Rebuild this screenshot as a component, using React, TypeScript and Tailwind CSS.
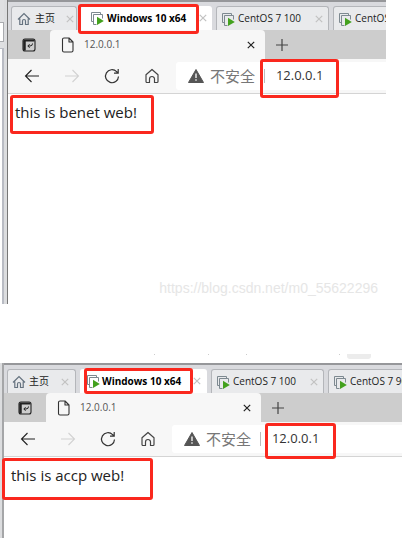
import { useState } from "react";

interface BrowserWindowProps {
  className: string;
  message: string;
  lastTab: string;
  // Highlight frames differ a little between the two windows
  homeTabClass: string;
  activeTabClass: string;
  tabMarkClass: string;
  addressMarkClass: string;
  messageClass: string;
}

function HomeIcon({ className }: { className: string }) {
  return (
    <svg viewBox="0 0 16 16" className={className} fill="none" stroke="currentColor" strokeWidth="1.2" strokeLinejoin="round">
      <path d="M2 6.800 8 1.500l6 5.300v6.700a1 1 0 0 1-1 1h-2.500V11a2.500 2.500 0 0 0-5 0v3.500H3a1 1 0 0 1-1-1z" />
    </svg>
  );
}

function TabHomeIcon() {
  return (
    <svg viewBox="0 0 14 14" className="h-3.5 w-3.5 shrink-0 text-[#65727f]" fill="none" stroke="currentColor" strokeWidth="1.2">
      <path d="M1 7.500 7 1.500l6 6M2.800 6.500v6h2.700V9a1.500 1.500 0 0 1 3 0v3.500h2.700v-6" />
    </svg>
  );
}

function MachineIcon() {
  return (
    <svg viewBox="0 0 14 14" className="h-3.5 w-3.5 shrink-0" fill="none">
      <path d="M3.500 10.500h-2v-9h9v2" stroke="#7d8990" />
      <path d="M6.500 13.500h-3v-10h9v4" stroke="#7d8990" />
      <path d="M7 5.800 13.800 9.900 7 14z" fill="#43a11e" />
    </svg>
  );
}

function CloseIcon({ className }: { className: string }) {
  return (
    <svg viewBox="0 0 8 8" className={className} fill="none" stroke="currentColor" strokeWidth="1.2">
      <path d="M.8.8 7.2 7.2M7.2.8.8 7.2" />
    </svg>
  );
}

function ArrowIcon({ className }: { className: string }) {
  return (
    <svg viewBox="0 0 16 16" className={className} fill="none" stroke="currentColor" strokeWidth="1.1">
      <path d="M15 8H1.500M7.500 2 1.500 8l6 6" />
    </svg>
  );
}

function MachineTab({ name }: { name: string }) {
  return (
    <button
      type="button"
      className="flex h-full w-[113px] shrink-0 items-center gap-[3px] rounded-t-[3px] border border-b-0 border-[#b4b6ba] bg-[#e9eaec] pr-[5px] pl-1"
    >
      <MachineIcon />
      <span>{name}</span>
      <CloseIcon className="ml-auto h-2 w-2 text-[#c2c2c2]" />
    </button>
  );
}

function BrowserWindow(props: BrowserWindowProps) {
  const [address, setAddress] = useState("12.0.0.1");

  return (
    <section className={props.className}>
      {/* virtual machine tabs */}
      <div className="flex h-[30px] gap-1 border-t-2 border-[#96979a] bg-[#d9dade] pt-1 pl-[3px] text-[10px] whitespace-nowrap text-[#222]">
        <button type="button" className={props.homeTabClass}>
          <TabHomeIcon />
          <span>主页</span>
          <CloseIcon className="ml-auto h-2 w-2 text-[#c2c2c2]" />
        </button>
        <div className="relative z-10 h-full shrink-0">
          <button type="button" className={props.activeTabClass}>
            <MachineIcon />
            <span>Windows 10 x64</span>
            <CloseIcon className="ml-auto h-2 w-2 text-[#c2c2c2]" />
          </button>
          <span className={props.tabMarkClass} />
        </div>
        <MachineTab name="CentOS 7 100" />
        <div className="h-full min-w-0 flex-1 overflow-hidden">
          <MachineTab name={props.lastTab} />
        </div>
      </div>

      {/* browser tabs */}
      <div className="flex h-[29px] bg-[#cdcdcd]">
        <button type="button" aria-label="Tab actions" className="flex w-[42px] shrink-0 items-center justify-center">
          <svg viewBox="0 0 14 14" className="h-3.5 w-3.5" fill="none" stroke="#222">
            <rect x="1" y="1" width="12" height="12" rx="2" strokeWidth="1.1" />
            <path d="M1.500 2.500h11" strokeWidth="2" />
            <path d="M2.500 3v9.500" strokeWidth="2.5" />
            <path d="M10.500 5.500a2.500 2.500 0 0 1-2.500 2.500H6M7.600 6.200 5.800 8l1.800 1.800" />
          </svg>
        </button>
        <button type="button" className="flex w-[215px] shrink-0 items-center rounded-t-[4px] bg-[#f7f7f7] pr-[10px] pl-[11px]">
          <svg viewBox="0 0 13 16" className="h-4 w-[13px]" fill="none" stroke="#333" strokeWidth="1.1" strokeLinejoin="round">
            <path d="M3 1h5l4 4v8.500a1.500 1.500 0 0 1-1.500 1.500H3a1.500 1.500 0 0 1-1.500-1.500v-11A1.500 1.500 0 0 1 3 1zM8 1v4h4" />
          </svg>
          <span className="ml-[10px] text-[10px] text-[#555]">12.0.0.1</span>
          <CloseIcon className="ml-auto h-2 w-2 text-[#222]" />
        </button>
        <button type="button" aria-label="New tab" className="ml-[10px] flex items-center text-[#444]">
          <svg viewBox="0 0 14 14" className="h-3.5 w-3.5" fill="none" stroke="currentColor" strokeWidth="1.2">
            <path d="M7 1v12M1 7h12" />
          </svg>
        </button>
      </div>

      {/* toolbar */}
      <div className="flex h-[35px] items-center border-b border-[#d4d4d4] bg-[#f7f7f7] pl-4">
        <div className="flex shrink-0 items-center gap-6">
          <button type="button" aria-label="Back">
            <ArrowIcon className="h-4 w-4 text-[#222]" />
          </button>
          <button type="button" aria-label="Forward">
            <ArrowIcon className="h-4 w-4 rotate-180 text-[#d2d2d2]" />
          </button>
          <button type="button" aria-label="Refresh">
            <svg viewBox="0 0 16 16" className="h-4 w-4" fill="none" stroke="#333" strokeWidth="1.2">
              <path d="M14.500 8.500A6.500 6.500 0 1 1 12.600 3.600L14 5M14.200 1v4.200H10" />
            </svg>
          </button>
          <button type="button" aria-label="Home">
            <HomeIcon className="h-4 w-4 text-[#444]" />
          </button>
        </div>
        <div className="ml-4 flex h-7 min-w-0 flex-1 items-center rounded-l-[3px] bg-white pl-3">
          <svg viewBox="0 0 16 14" className="h-3.5 w-4 shrink-0">
            <path d="M8 .5 15.500 13.500H.5z" fill="#555" stroke="#555" strokeLinejoin="round" />
            <path d="M8 4.500v4.500M8 10.300v1.500" stroke="#fff" strokeWidth="1.300" />
          </svg>
          <span className="ml-[6px] w-[54px] shrink-0 text-[15px] text-[#777]">不安全</span>
          <div className="relative flex h-full min-w-0 flex-1 items-center">
            <span className="h-3.5 w-px bg-[#bbb]" />
            <input
              type="text"
              aria-label="Address"
              value={address}
              onChange={(e) => setAddress(e.target.value)}
              className="ml-[11px] w-full min-w-0 bg-transparent text-[13px] text-[#333] outline-none"
            />
            <span className={props.addressMarkClass} />
          </div>
        </div>
      </div>

      <p className={props.messageClass}>{props.message}</p>
    </section>
  );
}

export default function App() {
  return (
    <main className="bg-white font-['Open_Sans','Noto_Sans_CJK_SC',sans-serif]">
      <div className="relative mr-[22px] flex h-[304px]">
        {/* edge of the library panel */}
        <div className="flex w-[4px] shrink-0 flex-col bg-[#dfe0e2]">
          <div className="mt-[22px] h-5 border-y border-r border-[#a9abaf] bg-white" />
          <div className="mt-1.5 flex-1 border-t border-r-2 border-[#b9bcc4] bg-white" />
        </div>
        <div className="w-[3px] shrink-0 bg-[#dcdddf]" />
        <BrowserWindow
          className="min-w-0 flex-1 border-l border-[#777]"
          message="this is benet web!"
          lastTab="CentOS 7 90"
          homeTabClass="flex h-full w-[66px] shrink-0 items-center gap-1 rounded-t-[3px] border border-b-0 border-[#b4b6ba] bg-[#e9eaec] pr-[2px] pl-[5px]"
          activeTabClass="flex h-full w-[131px] items-center gap-[3px] rounded-t-[3px] bg-white pr-[5px] pl-[9px] font-bold text-black"
          tabMarkClass="pointer-events-none absolute -top-[2px] right-[13px] -bottom-1 -left-[3px] rounded-[3px] border-[3px] border-[#fa281e]"
          addressMarkClass="pointer-events-none absolute -top-[3px] -bottom-2 -left-1 w-[79px] rounded-[3px] border-[3px] border-[#fa281e]"
          messageClass="mt-px ml-[2px] h-[39px] w-[144px] rounded-[3px] border-[3px] border-[#fa281e] pl-[2px] text-[15px] leading-7 whitespace-nowrap text-[#222]"
        />
        <span className="absolute right-2 bottom-2 font-['Liberation_Sans',sans-serif] text-[14px] leading-4 text-[#e6e6e6]">
          https://blog.csdn.net/m0_55622296
        </span>
      </div>

      {/* bottom edge of a toolbar above the second window */}
      <div className="mt-[50px] mr-[37px] mb-1 flex h-[5px] items-start justify-end">
        <span className="h-px w-px bg-[#ccc]" />
        <span className="ml-[53px] h-px w-px bg-[#ccc]" />
        <span className="ml-[37px] h-px w-px bg-[#ccc]" />
        <span className="ml-[92px] h-px w-px bg-[#ccc]" />
        <span className="ml-[7px] h-full w-6 rounded-b-[3px] bg-[#ececec]" />
      </div>

      <div className="mr-[6px] flex h-[175px]">
        <div className="w-[2px] shrink-0 bg-[#dcdddf]" />
        <BrowserWindow
          className="min-w-0 flex-1 border-l-2 border-[#a5a6a8]"
          message="this is accp web!"
          lastTab="CentOS 7 90"
          homeTabClass="flex h-full w-[69px] shrink-0 items-center gap-[3px] rounded-t-[3px] border border-b-0 border-[#b4b6ba] bg-[#e9eaec] pr-[6px] pl-1"
          activeTabClass="flex h-full w-[127px] items-center gap-[2px] rounded-t-[3px] bg-white pr-[6px] pl-[6px] font-bold text-black"
          tabMarkClass="pointer-events-none absolute -top-px right-[14px] -bottom-px left-1 rounded-[3px] border-[3px] border-[#fa281e]"
          addressMarkClass="pointer-events-none absolute -top-[2px] -bottom-[6px] left-[5px] w-[71px] rounded-[3px] border-[3px] border-[#fa281e]"
          messageClass="mt-px -ml-[2px] h-[42px] w-[151px] rounded-[3px] border-[3px] border-[#fa281e] pl-[6px] text-[15px] leading-7 whitespace-nowrap text-[#222]"
        />
      </div>
    </main>
  );
}
